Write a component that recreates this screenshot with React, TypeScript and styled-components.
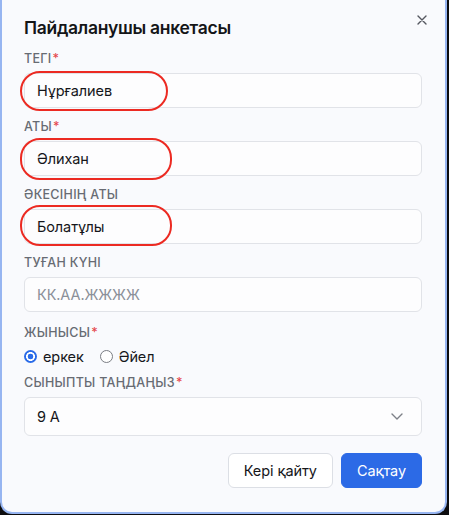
import React, { useState } from "react";
import styled, { createGlobalStyle } from "styled-components";

const Global = createGlobalStyle`
  html, body { margin: 0; padding: 0; background: #0d0d0f; }
  body { font-family: Inter, "Noto Sans", "Liberation Sans", sans-serif; }
  * { box-sizing: border-box; }
`;

const Dialog = styled.div`
  position: relative;
  width: 447px;
  height: 514px;
  background: #f9fafd;
  border: 2px solid #97b5f1;
  border-top: none;
  border-radius: 0 0 12px 12px;
  padding: 16px 23px 0 22px;
  display: flex;
  flex-direction: column;
`;

const Title = styled.h2`
  margin: 0 0 11px;
  font-size: 17.5px;
  line-height: 24px;
  font-weight: 600;
  color: #141518;
  letter-spacing: -0.3px;
`;

const Close = styled.button`
  position: absolute;
  top: 13px;
  right: 15px;
  width: 16px;
  height: 14px;
  padding: 0;
  border: none;
  background: transparent;
  display: flex;
  align-items: center;
  justify-content: center;
  cursor: pointer;
`;

const Form = styled.div`
  display: flex;
  flex-direction: column;
  gap: 11px;
`;

const Field = styled.div<{ $shift?: number }>`
  display: flex;
  flex-direction: column;
  gap: 6px;
  margin-top: ${(p) => p.$shift ?? 0}px;
`;

const Label = styled.div`
  font-size: 12.5px;
  line-height: 16px;
  font-weight: 500;
  letter-spacing: 0.3px;
  color: #676b73;
  text-transform: uppercase;
`;

const Star = styled.span`
  color: #e5484d;
  margin-left: 1px;
`;

const InputWrap = styled.div`
  position: relative;
`;

const Input = styled.div<{ $placeholder?: boolean; $h?: number }>`
  height: ${(p) => p.$h ?? 35}px;
  border: 1px solid #e1e3e8;
  border-radius: 6px;
  background: #fdfdfe;
  padding: 0 12px;
  display: flex;
  align-items: center;
  justify-content: space-between;
  font-size: 14.5px;
  letter-spacing: -0.1px;
  color: ${(p) => (p.$placeholder ? "#8b9099" : "#15161a")};
`;

const Mark = styled.span<{ $w: number; $h: number; $top: number }>`
  position: absolute;
  left: -4px;
  top: ${(p) => p.$top}px;
  width: ${(p) => p.$w}px;
  height: ${(p) => p.$h}px;
  border: 2px solid #ec2a22;
  border-radius: 20px;
  pointer-events: none;
`;

const RadioRow = styled.div`
  display: flex;
  align-items: center;
  gap: 16px;
  height: 20px;
  margin-top: -1px;
  margin-bottom: -2px;
`;

const RadioOption = styled.label`
  display: flex;
  align-items: center;
  gap: 6px;
  font-size: 14.5px;
  letter-spacing: -0.1px;
  color: #16171b;
  cursor: pointer;
`;

const Dot = styled.span<{ $on: boolean }>`
  width: 13px;
  height: 13px;
  border-radius: 50%;
  display: inline-block;
  ${(p) =>
    p.$on
      ? `background: radial-gradient(circle, #2a6be8 0 2.6px, #ffffff 3.1px 4.2px, #2a6be8 4.7px);`
      : `background: #ffffff; border: 1px solid #7a7d84;`}
`;

const Actions = styled.div`
  display: flex;
  justify-content: flex-end;
  gap: 8px;
  margin-top: 17px;
`;

const Button = styled.button<{ $primary?: boolean }>`
  height: 35px;
  padding: 0 15px;
  border-radius: 6px;
  font-family: inherit;
  font-size: 14.5px;
  letter-spacing: -0.1px;
  cursor: pointer;
  border: 1px solid ${(p) => (p.$primary ? "#2c6ae6" : "#dcdfe5")};
  background: ${(p) => (p.$primary ? "#2c6ae6" : "#ffffff")};
  color: ${(p) => (p.$primary ? "#ffffff" : "#15161a")};
`;

export default function App() {
  const [gender, setGender] = useState("m");
  return (
    <>
      <Global />
      <Dialog>
        <Close aria-label="close">
          <svg width="10" height="10" viewBox="0 0 10 10">
            <path d="M1 1L9 9M9 1L1 9" stroke="#555860" strokeWidth="1.4" strokeLinecap="round" />
          </svg>
        </Close>
        <Title>Пайдаланушы анкетасы</Title>
        <Form>
          <Field>
            <Label>
              Тегі<Star>*</Star>
            </Label>
            <InputWrap>
              <Input>Нұрғалиев</Input>
              <Mark $w={148} $h={40} $top={-2} />
            </InputWrap>
          </Field>
          <Field>
            <Label>
              Аты<Star>*</Star>
            </Label>
            <InputWrap>
              <Input>Әлихан</Input>
              <Mark $w={152} $h={42} $top={-3} />
            </InputWrap>
          </Field>
          <Field>
            <Label>Әкесінің аты</Label>
            <InputWrap>
              <Input>Болатұлы</Input>
              <Mark $w={152} $h={41} $top={-4} />
            </InputWrap>
          </Field>
          <Field>
            <Label>Туған күні</Label>
            <Input $placeholder>КК.АА.ЖЖЖЖ</Input>
          </Field>
          <Field $shift={2}>
            <Label>
              Жынысы<Star>*</Star>
            </Label>
            <RadioRow>
              <RadioOption onClick={() => setGender("m")}>
                <Dot $on={gender === "m"} />
                еркек
              </RadioOption>
              <RadioOption onClick={() => setGender("f")}>
                <Dot $on={gender === "f"} />
                Әйел
              </RadioOption>
            </RadioRow>
          </Field>
          <Field>
            <Label>
              Сыныпты таңдаңыз<Star>*</Star>
            </Label>
            <Input $h={39}>
              <span>9 А</span>
              <svg width="12" height="7" viewBox="0 0 12 7" style={{ marginRight: 6 }}>
                <path d="M1 1L6 6L11 1" stroke="#7d8088" strokeWidth="1.4" fill="none" strokeLinecap="round" strokeLinejoin="round" />
              </svg>
            </Input>
          </Field>
        </Form>
        <Actions>
          <Button>Кері қайту</Button>
          <Button $primary>Сақтау</Button>
        </Actions>
      </Dialog>
    </>
  );
}
